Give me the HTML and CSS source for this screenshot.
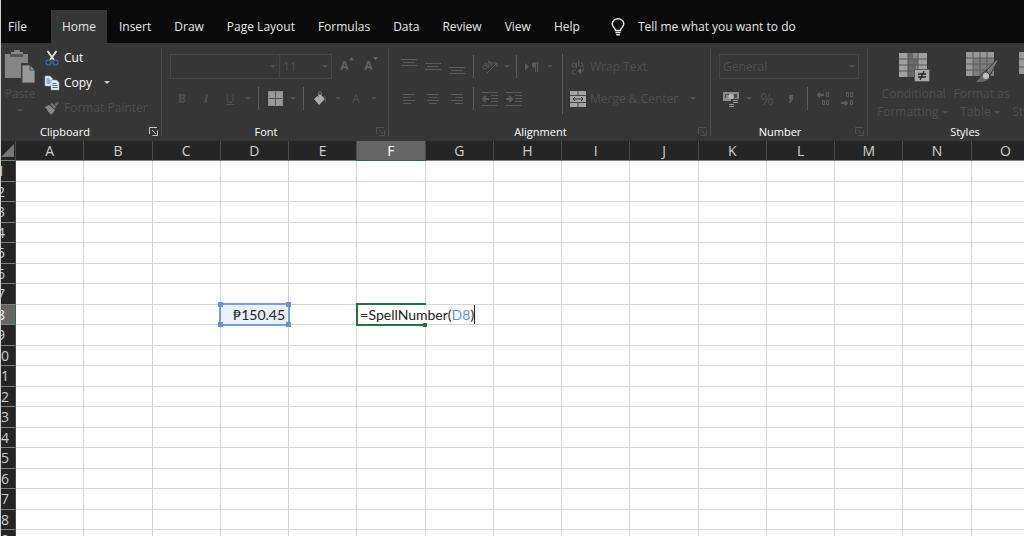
FILE: index.html
```html
<!DOCTYPE html>
<html lang="en">

<head>
    <meta charset="UTF-8">
    <meta name="viewport" content="width=device-width,initial-scale=1.0">
    <title>Excel</title>
    <link rel="stylesheet" href="styles.css">
</head>

<body>
    <div class="window">
        <!-- tabs -->
        <nav class="tabs">
            <button class="tab tab_file">File</button>
            <button class="tab tab_active">Home</button>
            <button class="tab">Insert</button>
            <button class="tab">Draw</button>
            <button class="tab">Page Layout</button>
            <button class="tab">Formulas</button>
            <button class="tab">Data</button>
            <button class="tab">Review</button>
            <button class="tab">View</button>
            <button class="tab">Help</button>
            <button class="tab tab_tell">
                <svg width="14" height="18" viewBox="0 0 14 18" fill="none" stroke="#e6e6e6" stroke-width="1.4">
                    <path d="M4.500 12.500C4.500 10 1.200 9 1.200 5.800a5.800 5 0 0 1 11.600 0C12.800 9 9.500 10 9.500 12.500z" />
                    <path d="M4.500 14.500h5M5.200 16.700h3.600" />
                </svg>
                Tell me what you want to do
            </button>
        </nav>

        <!-- ribbon -->
        <div class="ribbon">
            <section class="group group_clipboard">
                <div class="tools tools_side">
                    <button class="big paste" disabled>
                        <svg width="30" height="34" viewBox="0 0 30 34">
                            <path d="M0 4h6V2h3a3 3 0 0 1 6 0h3v2h5v9h-7v15H0z" fill="#858585" />
                            <path d="M5 4h13v3H5z" fill="#555" />
                            <path d="M17 15h8l5 5v13H17z" fill="#999" stroke="#444" />
                            <path d="M25 15v5h5" fill="none" stroke="#444" />
                        </svg>
                        <span>Paste</span>
                        <i class="caret"></i>
                    </button>
                    <div class="commands">
                        <button class="command">
                            <svg width="16" height="16" viewBox="0 0 16 16" fill="none">
                                <path d="M3.500 1l6.500 9M12.500 1L6 10" stroke="#ddd" stroke-width="2" />
                                <circle cx="4.500" cy="12.500" r="2.500" stroke="#35669b" stroke-width="1.500" />
                                <circle cx="11.500" cy="12.500" r="2.500" stroke="#35669b" stroke-width="1.500" />
                            </svg>
                            Cut
                        </button>
                        <button class="command">
                            <svg width="16" height="16" viewBox="0 0 16 16" fill="#e8eef4" stroke="#8ba3bb" stroke-width=".6">
                                <path d="M1 1h5l2.500 2.500V11H1z" />
                                <path d="M2.500 4h3M2.500 6h4M2.500 8h4" stroke="#3b6c9c" stroke-width="1" />
                                <path d="M7 5h5.500L15 7.500V15H7z" />
                                <path d="M8.500 8.500h4M8.500 10.500h5M8.500 12.500h5" stroke="#3b6c9c" stroke-width="1" />
                            </svg>
                            Copy
                            <i class="caret"></i>
                        </button>
                        <button class="command" disabled>
                            <svg width="16" height="16" viewBox="0 0 16 16">
                                <path d="M1 7l4-2 6 5-4 5z" fill="#8a8a8a" />
                                <path d="M6 4.500l2-1.500 4 4-1 2z" fill="#777" />
                                <path d="M10 5l3-3.500 2 1.500-3 3.500z" fill="#666" />
                            </svg>
                            Format Painter
                        </button>
                    </div>
                </div>
                <footer class="group_foot">
                    <span class="group_name">Clipboard</span>
                    <button class="launcher launcher_on" aria-label="Clipboard settings">
                        <svg width="9" height="9" viewBox="0 0 9 9"><path d="M.5 7V.5H8M3 3l4 4M8.500 3.500v5h-5" /></svg>
                    </button>
                </footer>
            </section>
            <div class="separator"></div>

            <section class="group group_font">
                <div class="tools">
                    <div class="row">
                        <label class="combo combo_font">
                            <select aria-label="Font" disabled><option></option></select>
                            <i class="caret"></i>
                        </label>
                        <label class="combo combo_size">
                            <select aria-label="Font size" disabled><option>11</option></select>
                            <i class="caret"></i>
                        </label>
                        <button class="tool tool_grow" disabled>A<svg width="5" height="4" viewBox="0 0 5 4"><path d="M0 3.500L2.500 0 5 3.500z" /></svg></button>
                        <button class="tool tool_grow" disabled>A<svg width="5" height="4" viewBox="0 0 5 4"><path d="M0 0l2.500 3.500L5 0z" /></svg></button>
                    </div>
                    <div class="row">
                        <button class="tool" disabled><b>B</b></button>
                        <button class="tool" disabled><b><em>I</em></b></button>
                        <button class="tool" disabled><u>U</u></button>
                        <i class="caret"></i>
                        <i class="rule"></i>
                        <button class="tool" aria-label="Borders" disabled>
                            <svg width="15" height="15" viewBox="0 0 15 15">
                                <path d="M0 0h15v15H0z" fill="#999" />
                                <path d="M7.500 1v13M1 7.500h13" stroke="#555" />
                                <path d="M.5 .5h14v14H.5z" fill="none" stroke="#808080" stroke-dasharray="1 1" />
                            </svg>
                        </button>
                        <i class="caret"></i>
                        <i class="rule"></i>
                        <button class="tool" aria-label="Fill color" disabled>
                            <svg width="16" height="16" viewBox="0 0 16 16">
                                <path d="M2 8l6-5 5 5-6 6z" fill="#aaa" />
                                <path d="M6.500 6V2.500a1.500 1.500 0 0 1 3 0V5" fill="none" stroke="#777" />
                                <path d="M11 5c3 0 3.500 2 3 7-1-1-1.500-3-1.500-4z" fill="#555" />
                            </svg>
                        </button>
                        <i class="caret"></i>
                        <button class="tool" disabled>A</button>
                        <i class="caret"></i>
                    </div>
                </div>
                <footer class="group_foot">
                    <span class="group_name">Font</span>
                    <button class="launcher" aria-label="Font settings">
                        <svg width="9" height="9" viewBox="0 0 9 9"><path d="M.5 7V.5H8M3 3l4 4M8.500 3.500v5h-5" /></svg>
                    </button>
                </footer>
            </section>
            <div class="separator"></div>

            <section class="group group_align">
                <div class="tools tools_side">
                    <div class="stack">
                        <div class="row">
                            <button class="tool" aria-label="Top align" disabled>
                                <svg class="lines" width="16" height="16" viewBox="0 0 16 16"><path d="M0 .5h16M2 3.500h12M0 6.500h16" /></svg>
                            </button>
                            <button class="tool" aria-label="Middle align" disabled>
                                <svg class="lines" width="16" height="16" viewBox="0 0 16 16"><path d="M0 4.500h16M2 7.500h12M0 10.500h16" /></svg>
                            </button>
                            <button class="tool" aria-label="Bottom align" disabled>
                                <svg class="lines" width="16" height="16" viewBox="0 0 16 16"><path d="M0 8.500h16M2 11.500h12M0 14.500h16" /></svg>
                            </button>
                            <i class="rule"></i>
                            <button class="tool" aria-label="Orientation" disabled>
                                <svg class="lines" width="16" height="16" viewBox="0 0 16 16">
                                    <circle cx="3" cy="8" r="2" /><path d="M3 4l4 5" />
                                    <circle cx="8" cy="5" r="2" /><path d="M6 1l4 5M4 15L15 4M15 8V4h-4" />
                                </svg>
                            </button>
                            <i class="caret caret_narrow"></i>
                            <i class="rule"></i>
                            <button class="tool" aria-label="Text direction" disabled>
                                <svg width="16" height="16" viewBox="0 0 16 16" fill="#5c5c5c">
                                    <path d="M0 4l4 3.500L0 11zM9 3.500h5v1h-1V13h-1V4.500h-1V13h-1V9c-4 0-4-5.500-1-5.500z" />
                                </svg>
                            </button>
                            <i class="caret caret_narrow"></i>
                        </div>
                        <div class="row">
                            <button class="tool" aria-label="Align left" disabled>
                                <svg class="lines" width="16" height="16" viewBox="0 0 16 16"><path d="M2 3.500h12M2 6.500h8M2 9.500h12M2 12.500h8" /></svg>
                            </button>
                            <button class="tool" aria-label="Center" disabled>
                                <svg class="lines" width="16" height="16" viewBox="0 0 16 16"><path d="M2 3.500h12M4 6.500h8M2 9.500h12M4 12.500h8" /></svg>
                            </button>
                            <button class="tool" aria-label="Align right" disabled>
                                <svg class="lines" width="16" height="16" viewBox="0 0 16 16"><path d="M2 3.500h12M6 6.500h8M2 9.500h12M6 12.500h8" /></svg>
                            </button>
                            <i class="rule"></i>
                            <button class="tool" aria-label="Decrease indent" disabled>
                                <svg class="lines" width="16" height="16" viewBox="0 0 16 16"><path d="M0 1.500h16M9 4.500h7M9 7.500h7M9 10.500h7M0 14.500h16" /><path d="M7 8H1M4 5L1 8l3 3" stroke-width="2" /></svg>
                            </button>
                            <button class="tool" aria-label="Increase indent" disabled>
                                <svg class="lines" width="16" height="16" viewBox="0 0 16 16"><path d="M0 1.500h16M9 4.500h7M9 7.500h7M9 10.500h7M0 14.500h16" /><path d="M0 8h6M3 5l3 3-3 3" stroke-width="2" /></svg>
                            </button>
                        </div>
                    </div>
                    <i class="rule rule_tall"></i>
                    <div class="stack">
                        <button class="command" disabled>
                            <svg width="16" height="16" viewBox="0 0 16 16" fill="none" stroke="#555">
                                <path d="M8.500 1v6" /><circle cx="10.500" cy="5.500" r="2" />
                                <circle cx="4" cy="6" r="2" /><path d="M6.500 3.500V9" />
                                <path d="M6 11H4a2 2 0 0 0 0 4h2M13 6v6H9" /><path d="M11 9l-3 3 3 3" fill="#666" />
                            </svg>
                            Wrap Text
                        </button>
                        <button class="command" disabled>
                            <svg width="16" height="16" viewBox="0 0 16 16">
                                <path d="M0 0h16v16H0z" fill="#a5a5a5" />
                                <path d="M0 4.500h16M0 11.500h16M8 0v4M8 12v4" stroke="#444" />
                                <path d="M3 8h10M5 6L3 8l2 2M11 6l2 2-2 2" fill="none" stroke="#333" />
                            </svg>
                            Merge &amp; Center
                            <i class="caret"></i>
                        </button>
                    </div>
                </div>
                <footer class="group_foot">
                    <span class="group_name">Alignment</span>
                    <button class="launcher" aria-label="Alignment settings">
                        <svg width="9" height="9" viewBox="0 0 9 9"><path d="M.5 7V.5H8M3 3l4 4M8.500 3.500v5h-5" /></svg>
                    </button>
                </footer>
            </section>
            <div class="separator"></div>

            <section class="group group_number">
                <div class="tools">
                    <div class="row">
                        <label class="combo combo_number">
                            <select aria-label="Number format" disabled><option>General</option></select>
                            <i class="caret"></i>
                        </label>
                    </div>
                    <div class="row">
                        <button class="tool" aria-label="Accounting format" disabled>
                            <svg width="16" height="16" viewBox="0 0 16 16">
                                <path d="M0 1h16v9H0z" fill="#8c8c8c" />
                                <path d="M2 3h4v1H3v3H2zM11 3h3v4h-3z" fill="#4a4a4a" />
                                <circle cx="8" cy="5.500" r="2.500" fill="#b5b5b5" />
                                <path d="M8 8h8v8H5v-4h3z" fill="#363636" />
                                <path d="M10 9.500h5M10 11.500h5M6 13.500h5M6 15.500h5" stroke="#999" />
                            </svg>
                        </button>
                        <i class="caret"></i>
                        <button class="tool tool_percent" disabled>%</button>
                        <button class="tool" aria-label="Comma style" disabled>
                            <svg width="6" height="8" viewBox="0 0 6 8"><path d="M1 0h4v4L2.500 8H1l1-4H1z" fill="#5c5c5c" /></svg>
                        </button>
                        <i class="rule"></i>
                        <button class="tool" aria-label="Increase decimal" disabled>
                            <svg class="lines" width="16" height="16" viewBox="0 0 16 16"><path d="M8 4H2M4 2L2 4l2 2" stroke-width="2" /><path d="M10.500 1.500h2v4h-2zM6.500 9.500h2v4h-2zM10.500 9.500h2v4h-2z" /></svg>
                        </button>
                        <button class="tool" aria-label="Decrease decimal" disabled>
                            <svg class="lines" width="16" height="16" viewBox="0 0 16 16"><path d="M1 12h6M5 10l2 2-2 2" stroke-width="2" /><path d="M6.500 1.500h2v4h-2zM10.500 1.500h2v4h-2zM10.500 9.500h2v4h-2z" /></svg>
                        </button>
                    </div>
                </div>
                <footer class="group_foot">
                    <span class="group_name">Number</span>
                    <button class="launcher" aria-label="Number settings">
                        <svg width="9" height="9" viewBox="0 0 9 9"><path d="M.5 7V.5H8M3 3l4 4M8.500 3.500v5h-5" /></svg>
                    </button>
                </footer>
            </section>
            <div class="separator"></div>

            <section class="group group_styles">
                <div class="tools tools_side">
                    <button class="big" disabled>
                        <svg width="32" height="32" viewBox="0 0 32 32">
                            <path d="M1 1h28v24H1z" fill="#a0a0a0" />
                            <path d="M10 1h10v24H10z" fill="#686868" />
                            <path d="M15 1h5v6h-5zM18 13h2v6h-2z" fill="#8b8b8b" />
                            <path d="M1 7h28M1 13h28M1 19h28M10 1v24M20 1v24" stroke="#555" />
                            <path d="M16.500 17.500h15v12h-15z" fill="#aaa" stroke="#555" />
                            <path d="M20 22h8M20 25h8M26 19l-4 9" stroke="#222" stroke-width="1.300" />
                        </svg>
                        <span>Conditional</span>
                        <span>Formatting <i class="caret"></i></span>
                    </button>
                    <button class="big" disabled>
                        <svg width="32" height="32" viewBox="0 0 32 32">
                            <path d="M0 0h28v24H0z" fill="#999" />
                            <path d="M7 6h21v18H7z" fill="#7d7d7d" />
                            <path d="M0 6h28M0 12h28M0 18h28M7 0v24M14 0v24M21 0v24" stroke="#5a5a5a" />
                            <path d="M31 7L20 19l4 4 8-14z" fill="#777" stroke="#363636" />
                            <path d="M20 19c-4 0-4 6-11 11 8 2 15-1 15-7z" fill="#686868" stroke="#363636" />
                            <circle cx="20" cy="24" r="3" fill="#c0c0c0" />
                        </svg>
                        <span>Format as</span>
                        <span>Table <i class="caret"></i></span>
                    </button>
                    <button class="big" disabled>
                        <svg width="32" height="32" viewBox="0 0 32 32">
                            <path d="M0 0h28v22H0z" fill="#999" />
                            <path d="M0 7h28M0 15h28M9 0v22M19 0v22" stroke="#5a5a5a" />
                        </svg>
                        <span>Cell</span>
                        <span>Styles <i class="caret"></i></span>
                    </button>
                </div>
                <footer class="group_foot">
                    <span class="group_name">Styles</span>
                </footer>
            </section>
        </div>

        <!-- sheet, rows are filled in by script.js -->
        <table class="sheet">
            <thead>
                <tr id="columns"></tr>
            </thead>
            <tbody id="rows"></tbody>
        </table>
    </div>
    <script src="script.js"></script>
</body>

</html>
```

FILE: styles.css
```css
* {
    box-sizing: border-box;
    padding: 0;
    margin: 0;
}

body {
    border-left: 1px solid #d0d0d0;
    height: 100vh;
    overflow: hidden;
    background-color: #ffffff;
    font-family: "Open Sans", "Noto Sans", sans-serif;
    font-size: 12px;
    color: #e6e6e6;
}

button,
select {
    font: inherit;
    color: inherit;
    background: none;
    border: 0;
}

svg {
    flex: none;
}

/* the window hangs over the left edge of the screen */
.window {
    margin-left: -14px;
}

/* tabs */
.tabs {
    display: flex;
    gap: 1px;
    height: 43px;
    padding: 10px 0 0 10px;
    background-color: #0a0a0a;
}

.tab {
    padding: 0 11px;
    white-space: nowrap;
}

.tab_file {
    margin-right: 12px;
}

.tab_active {
    background-color: #363636;
}

.tab_tell {
    display: flex;
    align-items: center;
    gap: 13px;
    margin-left: 8px;
}

/* ribbon */
.ribbon {
    display: flex;
    height: 98px;
    background-color: #363636;
}

.separator {
    flex: none;
    width: 1px;
    margin: 5px 0;
    background-color: #4d4d4d;
}

.group {
    flex: none;
    display: flex;
    flex-direction: column;
    padding-top: 11px;
}

.group_clipboard {
    width: 174px;
    padding-top: 2px;
}

.group_font {
    width: 226px;
}

.group_align {
    width: 321px;
}

.group_number {
    width: 156px;
}

.group_styles {
    width: 194px;
    padding-top: 9px;
}

.tools {
    padding-left: 8px;
}

.tools,
.stack {
    display: flex;
    flex-direction: column;
    gap: 7px;
}

.tools_side {
    flex-direction: row;
    gap: 0;
}

.group_styles .tools {
    gap: 3px;
    padding-left: 9px;
}

.row {
    display: flex;
    align-items: center;
    height: 25px;
}

.group_foot {
    display: flex;
    align-items: center;
    height: 20px;
    margin-top: auto;
    font-size: 11px;
    color: #ffffff;
}

.group_name {
    flex: 1;
    text-align: center;
}

.launcher {
    width: 18px;
    height: 18px;
    padding-left: 6px;
    text-align: left;
}

.launcher svg {
    display: block;
    fill: none;
    stroke: #505050;
}

.launcher_on svg {
    stroke: #c8c8c8;
}

.caret {
    flex: none;
    display: flex;
    justify-content: center;
    width: 12px;
    color: #505050;
}

.caret::before {
    content: "";
    border: 3px solid transparent;
    border-top-color: currentColor;
    border-bottom: 0;
}

.caret_narrow {
    width: 10px;
}

.rule {
    flex: none;
    width: 1px;
    height: 23px;
    margin: 0 4px;
    background-color: #5c5c5c;
}

.rule_tall {
    height: 60px;
    margin: 0 7px;
}

.tool {
    display: flex;
    align-items: center;
    justify-content: center;
    width: 24px;
    height: 24px;
    color: #505050;
}

.tool_grow {
    align-items: flex-start;
    padding: 2px 0 0 4px;
    font-weight: bold;
    color: #626262;
    fill: #626262;
}

.tool_percent {
    font-size: 16px;
}

.lines {
    fill: none;
    stroke: #5c5c5c;
}

.combo {
    display: flex;
    align-items: center;
    height: 25px;
    border: 1px solid #464646;
    color: #505050;
}

.combo select {
    flex: 1;
    min-width: 0;
    padding-left: 3px;
    appearance: none;
    opacity: 1;
}

.combo_font {
    width: 110px;
}

.combo_size {
    width: 53px;
    margin: 0 1px 0 -1px;
}

.combo_number {
    width: 140px;
}

.commands {
    display: flex;
    flex-direction: column;
    padding-left: 4px;
}

.command {
    display: flex;
    align-items: center;
    gap: 4px;
    height: 25px;
    color: #ffffff;
    white-space: nowrap;
}

.command .caret {
    margin-left: 5px;
    color: #cccccc;
}

.command:disabled,
.command:disabled .caret {
    color: #505050;
}

.big {
    display: flex;
    flex-direction: column;
    align-items: center;
    line-height: 18px;
    color: #505050;
}

.big span {
    display: flex;
    align-items: center;
    white-space: nowrap;
}

.big svg {
    margin-bottom: 1px;
}

.paste {
    width: 40px;
    margin-left: 5px;
    padding-top: 5px;
}

.paste .caret {
    margin-top: 6px;
}

/* sheet */
.sheet {
    width: calc(100% + 16px);
    table-layout: fixed;
    border-collapse: separate;
    border-spacing: 0;
    background-color: #ffffff;
    font-size: 14px;
    line-height: 18px;
}

.sheet th {
    height: 21px;
    border-right: 1px solid #4a4a4a;
    border-bottom: 1px solid #808080;
    background-color: #252525;
    font-weight: normal;
    color: #d0d0d0;
}

.sheet thead th {
    height: 20px;
}

.sheet td {
    border-right: 1px solid #d6d6d6;
    border-bottom: 1px solid #d6d6d6;
    color: #222222;
}

.sheet tr:nth-child(even) th {
    height: 20px;
}

.sheet .corner {
    width: 29px;
}

.corner svg {
    display: block;
    margin: 0 1px 0 auto;
}

.sheet .current {
    background-color: #666666;
    color: #ffffff;
}

.sheet thead .current {
    border-bottom-color: #217346;
}

.sheet tbody .current {
    border-right-color: #217346;
}

.source,
.editing {
    position: relative;
    font-family: Lato, "Open Sans", sans-serif;
}

.sheet .source {
    padding-right: 3px;
    background-color: #e9f1fb;
    text-align: right;
}

/* range outline with its four handles */
.outline {
    position: absolute;
    top: -2px;
    right: -2px;
    bottom: -2px;
    left: -2px;
    border: 2px solid #7a9fd8;
}

.handle {
    position: absolute;
    width: 5px;
    height: 5px;
    background-color: #6a92d0;
}

.handle_tl {
    top: -3px;
    left: -3px;
}

.handle_tr {
    top: -3px;
    right: -3px;
}

.handle_bl {
    bottom: -3px;
    left: -3px;
}

.handle_br {
    bottom: -3px;
    right: -3px;
}

/* frame of the cell being edited, open towards the overflowing text */
.frame {
    position: absolute;
    top: -2px;
    right: -1px;
    bottom: -2px;
    left: -1px;
    z-index: 2;
    border: 2px solid #217346;
    border-right: 0;
}

.fill_handle {
    position: absolute;
    right: -1px;
    bottom: -3px;
    width: 4px;
    height: 4px;
    background-color: #217346;
}

.formula {
    position: absolute;
    top: 0;
    left: 1px;
    z-index: 1;
    padding: 1px 0 0 2px;
    border-right: 1px solid #222222;
    background-color: #ffffff;
    white-space: nowrap;
}

.formula .ref {
    color: #5b9bd5;
}
```

FILE: script.js
```js
const letters = 'ABCDEFGHIJKLMNO'.split('');
const rowCount = 19;
const current = { column: 'F', row: 8 };

const cells = {
    D8: {
        className: 'source',
        html: '₱150.45<div class="outline">' +
            '<i class="handle handle_tl"></i><i class="handle handle_tr"></i>' +
            '<i class="handle handle_bl"></i><i class="handle handle_br"></i></div>'
    },
    F8: {
        className: 'editing',
        html: '<div class="frame"><i class="fill_handle"></i></div>' +
            '<div class="formula" contenteditable="true" spellcheck="false">=SpellNumber(<span class="ref">D8</span>)</div>'
    }
};

let head = '<th class="corner"><svg width="13" height="13" viewBox="0 0 13 13"><path d="M13 0v13H0z" fill="#777"/></svg></th>';
letters.forEach(letter => {
    head += `<th class="${letter === current.column ? 'current' : ''}">${letter}</th>`;
});
document.querySelector('#columns').innerHTML = head;

let body = '';
for (let row = 1; row <= rowCount; row++) {
    body += `<tr><th class="${row === current.row ? 'current' : ''}">${row}</th>`;
    letters.forEach(letter => {
        const cell = cells[letter + row];
        body += cell ? `<td class="${cell.className}">${cell.html}</td>` : '<td></td>';
    });
    body += '</tr>';
}
document.querySelector('#rows').innerHTML = body;
```
